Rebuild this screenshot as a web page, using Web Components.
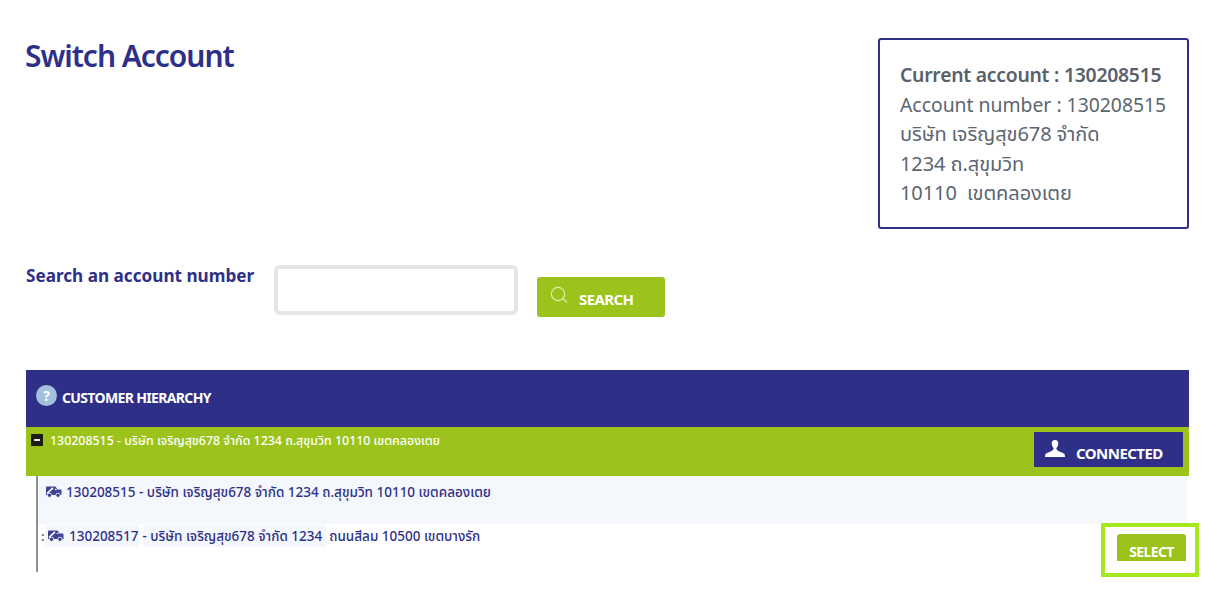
<!DOCTYPE html>
<html>
<head>
<meta charset="utf-8">
<title>Switch Account</title>
<style>
  body { margin: 0; background: #fff; font-family: "Noto Sans", "Open Sans", sans-serif; }
</style>
</head>
<body>
<switch-account-page>
  <page-top>
    <h-title slot="title">Switch Account</h-title>
    <account-box slot="box">
      <b>Current account : 130208515</b>
      <span>Account number : 130208515</span>
      <span class="th">บริษัท เจริญสุข678 จำกัด</span>
      <span class="th">1234 ถ.สุขุมวิท</span>
      <span class="th">10110&nbsp; เขตคลองเตย</span>
    </account-box>
  </page-top>
  <search-bar></search-bar>
  <customer-hierarchy></customer-hierarchy>
</switch-account-page>

<script>
const NAVY = "#2e3087";
const GREEN = "#9bc31b";
const THAI = '"Noto Sans", "Open Sans", "Noto Sans Thai", "DejaVu Sans", sans-serif';

// the little car icon used on each account row
const carIcon = `
  <svg width="17" height="12" viewBox="0 0 17 12">
    <path d="M1 1.500Q1 .5 2 .5H10.500L12.500 3.500H15.500Q16.500 3.500 16.500 4.500V9H1Z" fill="#3f4494"/>
    <path d="M2 7.500 8 1.800" stroke="#fff" stroke-width="1.600" fill="none"/>
    <path d="M10.800 2.400 12 4H9.500Z" fill="#fff"/>
    <circle cx="4.500" cy="9.300" r="2.100" fill="#343a8c" stroke="#fff" stroke-width="0.800"/>
    <circle cx="13" cy="9.300" r="2.100" fill="#343a8c" stroke="#fff" stroke-width="0.800"/>
  </svg>`;

class SwitchAccountPage extends HTMLElement {
  constructor() {
    super();
    this.attachShadow({ mode: "open" }).innerHTML = `
      <style>
        :host { display: block; position: relative; padding: 38px 32px 0 26px; height: 553px; overflow: hidden; }
      </style>
      <slot></slot>`;
  }
}

class PageTop extends HTMLElement {
  constructor() {
    super();
    this.attachShadow({ mode: "open" }).innerHTML = `
      <style>
        :host { display: flex; justify-content: space-between; align-items: flex-start; }
      </style>
      <slot name="title"></slot>
      <slot name="box"></slot>`;
  }
}

class HTitle extends HTMLElement {
  constructor() {
    super();
    this.attachShadow({ mode: "open" }).innerHTML = `
      <style>
        :host { display: block; margin-left: -1px; color: ${NAVY}; font: 600 30px/36px "Noto Sans", sans-serif; letter-spacing: -1.05px; }
      </style>
      <slot></slot>`;
  }
}

class AccountBox extends HTMLElement {
  constructor() {
    super();
    this.attachShadow({ mode: "open" }).innerHTML = `
      <style>
        :host { display: flex; flex-direction: column; box-sizing: border-box; width: 311px; height: 191px; padding: 20px 0 0 20px;
                border: 2px solid ${NAVY}; border-radius: 3px; color: #5c6670; white-space: nowrap;
                font: 400 19.35px/29.5px ${THAI}; }
        ::slotted(b) { font-weight: 600; color: #56616b; letter-spacing: -0.24px; }
        ::slotted(.th) { font-size: 20px; letter-spacing: -0.08px; }
      </style>
      <slot></slot>`;
  }
}

class SearchBar extends HTMLElement {
  constructor() {
    super();
    this.attachShadow({ mode: "open" }).innerHTML = `
      <style>
        :host { display: flex; margin-top: 36px; align-items: flex-start; }
        label { width: 248px; color: ${NAVY}; font: 700 17.15px/21px "Noto Sans", sans-serif; white-space: nowrap; }
        .field { box-sizing: border-box; width: 244px; height: 50px; border: 4px solid #e5e5e5; border-radius: 6px; background: #fff; outline: none; }
        button { margin: 12px 0 0 19px; width: 128px; height: 40px; border: 0; border-radius: 3px; background: ${GREEN};
                 color: #fff; display: flex; align-items: center; padding: 0 0 0 13px; gap: 11px;
                 font: 700 15px "Noto Sans", sans-serif; letter-spacing: -0.6px; }
        svg { margin-top: -4px; }
      </style>
      <label>Search an account number</label>
      <input class="field" type="text">
      <button>
        <svg width="18" height="18" viewBox="0 0 18 18" fill="none" stroke="#e4efbe" stroke-width="1.1">
          <circle cx="8" cy="8" r="6.6"/><path d="M13 12.5l4 4.2"/>
        </svg>
        <span style="padding-top:3px">SEARCH</span>
      </button>`;
  }
}

class CustomerHierarchy extends HTMLElement {
  constructor() {
    super();
    this.attachShadow({ mode: "open" }).innerHTML = `
      <style>
        :host { display: block; margin-top: 53px; font-family: ${THAI}; }
        .head { height: 57px; background: ${NAVY}; color: #fff; display: flex; align-items: center; padding-left: 10px; gap: 5px;
                font: 700 14px "Noto Sans", sans-serif; letter-spacing: -0.65px; }
        .head .q { width: 21px; height: 21px; border-radius: 50%; background: #a3c1dc; color: #fff; font: 700 14px/21px "Noto Sans", sans-serif;
                   text-align: center; letter-spacing: 0; margin-top: -7px; }
        .head .t { margin-top: -3px; }
        .root { height: 49px; background: ${GREEN}; color: #fff; display: flex; justify-content: space-between; font-size: 12.4px; font-weight: 500; }
        .root .l { display: flex; align-items: center; height: 26px; padding-left: 5px; gap: 7px; white-space: nowrap; }
        .root .l span:last-child { margin-top: 2px; }
        .minus { width: 12px; height: 12px; border-radius: 1px; background: #1c1c14; display: flex; align-items: center; justify-content: center; }
        .minus::before { content: ""; width: 6px; height: 2px; background: #e8e8e8; }
        .connected { box-sizing: border-box; width: 149px; height: 35px; margin: 5px 6px 0 0; background: ${NAVY}; color: #fff;
                     display: flex; align-items: center; padding-left: 11px; gap: 11px;
                     font: 700 15px "Noto Sans", sans-serif; letter-spacing: -0.55px; }
        .connected svg { margin-top: -3px; }
        .connected span { margin-top: 7px; }
        .tree { margin-left: 10px; border-left: 2px solid #8f8f8f; }
        .row { box-sizing: border-box; height: 48px; display: flex; color: ${NAVY}; font-size: 13.5px; font-weight: 500; white-space: nowrap; }
        .row.a { background: #f4f7fb; margin-right: 2px; padding: 9px 0 0 7px; line-height: 15px; gap: 4px; }
        .row.a svg { margin-top: 1px; }
        .row.b { position: relative; padding: 1px 0 0 3px; line-height: 22px; align-items: flex-start; }
        .hl { background: #f4f7fb; display: flex; align-items: center; height: 22px; }
        .frag { font-size: 13px; font-weight: 700; color: #6b7090; width: 4px; background: #fff; }
        .row.b svg { margin: 0 5px 0 2px; }
        .gap { width: 4px; }
        .select-mark { position: absolute; top: -1px; right: -10px; box-sizing: border-box; width: 98px; height: 54px; border: 4px solid #a5e81c; background: #fff; }
        .select-mark div { position: absolute; left: 12px; top: 7px; width: 69px; height: 27px; border-radius: 3px 3px 0 0; background: ${GREEN}; color: #fff;
                           font: 700 14px/35px "Noto Sans", sans-serif; text-align: center; letter-spacing: -0.6px; overflow: hidden; }
      </style>
      <div class="head"><span class="q">?</span><span class="t">CUSTOMER HIERARCHY</span></div>
      <div class="root">
        <div class="l"><span class="minus"></span><span>130208515 - บริษัท เจริญสุข678 จำกัด 1234 ถ.สุขุมวิท 10110 เขตคลองเตย</span></div>
        <div class="connected">
          <svg width="20" height="17" viewBox="0 0 20 17" fill="#fff">
            <path d="M10 0c2.200 0 3.300 1.500 3.300 3.400 0 2.200-1.300 3.400-2 5.300.5 1.800 2.800 2.800 7.200 4.500 1 .4 1.500 1.800 1.500 3.800H0c0-2 .5-3.400 1.500-3.800 4.400-1.700 6.700-2.700 7.200-4.500-.7-1.900-2-3.100-2-5.300C6.700 1.500 7.800 0 10 0z"/>
          </svg>
          <span>CONNECTED</span>
        </div>
      </div>
      <div class="tree">
        <div class="row a">${carIcon}<span>130208515 - บริษัท เจริญสุข678 จำกัด 1234 ถ.สุขุมวิท 10110 เขตคลองเตย</span></div>
        <div class="row b">
          <span class="frag">:</span>
          <span class="hl">${carIcon}<span>130208517</span></span>
          <span class="gap"></span>
          <span class="hl">- บริษัท เจริญสุข678 จำกัด 1234&nbsp;</span>
          <span>&nbsp;ถนนสีลม 10500 เขตบางรัก</span>
          <div class="select-mark"><div>SELECT</div></div>
        </div>
      </div>`;
  }
}

customElements.define("switch-account-page", SwitchAccountPage);
customElements.define("page-top", PageTop);
customElements.define("h-title", HTitle);
customElements.define("account-box", AccountBox);
customElements.define("search-bar", SearchBar);
customElements.define("customer-hierarchy", CustomerHierarchy);
</script>
</body>
</html>
